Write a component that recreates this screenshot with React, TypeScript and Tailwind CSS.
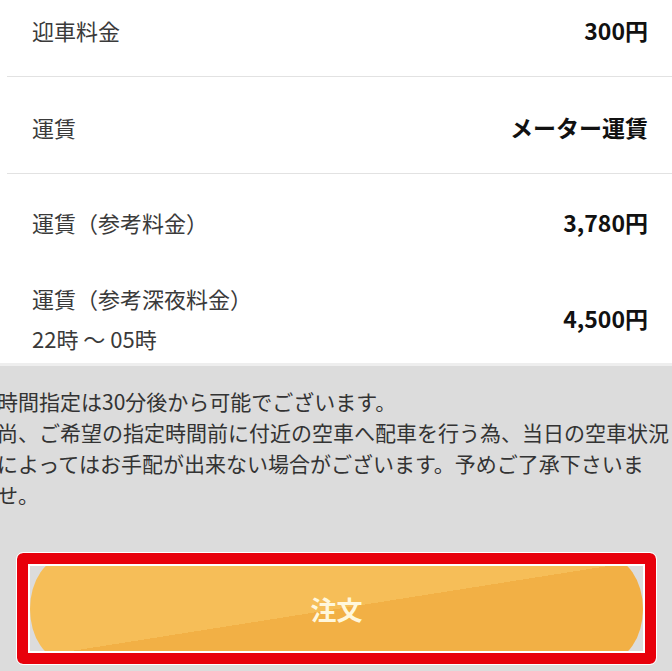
const ROWS = [
  { label: ["迎車料金"], value: "300円", pad: "pt-[11px] pb-[27px] border-b" },
  { label: ["運賃"], value: "メーター運賃", pad: "pt-[31px] pb-[27px] border-b" },
  { label: ["運賃（参考料金）"], value: "3,780円", pad: "pt-[29px] pb-[27px]" },
  { label: ["運賃（参考深夜料金）", "22時 〜 05時"], value: "4,500円", pad: "pt-[10px] pb-[5px]" },
];

export default function App() {
  return (
    <div
      className="w-[672px] h-[671px] overflow-hidden bg-[#dcdcdc]"
      style={{ fontFamily: '"Noto Sans CJK JP", "Noto Sans", sans-serif' }}
    >
      {/* Fare list */}
      <div className="bg-white">
        <ul className="ml-[7px]">
          {ROWS.map((row) => (
            <li
              key={row.value}
              className={`flex items-center justify-between pl-[25px] pr-[24px] border-[#e2e2e2] ${row.pad}`}
            >
              <div className="text-[22px] text-[#3a3a3a]">
                {row.label.map((l) => (
                  <p key={l} className={row.label.length > 1 ? "leading-[40px]" : "leading-[38px]"}>
                    {l}
                  </p>
                ))}
              </div>
              <span className="text-[23px] leading-[38px] font-bold text-[#111]">{row.value}</span>
            </li>
          ))}
        </ul>
      </div>
      <div className="h-[3px] bg-[#eeeeee]" />

      {/* Notice */}
      <div className="mt-[20px] overflow-hidden">
        <p className="ml-[-3px] w-[680px] text-[21px] leading-[31px] text-[#333]">
          時間指定は30分後から可能でございます。
          <br />
          尚、ご希望の指定時間前に付近の空車へ配車を行う為、当日の空車状況によってはお手配が出来ない場合がございます。予めご了承下さいませ。
        </p>
      </div>

      {/* Order button */}
      <div className="relative mt-[43px] mx-[17px] w-[639px] h-[111px] flex items-center px-[13px]">
        <button className="w-full h-[104px] rounded-[36px/52px] bg-[linear-gradient(171deg,#f6be58_50%,#f2b045_50%)] text-[26px] font-bold text-[#fff7dc]">
          注文
        </button>
        <div className="absolute inset-0 rounded-[6px] border-[11px] border-[#e8000b] outline outline-[1.5px] outline-white shadow-[inset_0_0_0_2px_#ffffff]" />
      </div>
    </div>
  );
}
